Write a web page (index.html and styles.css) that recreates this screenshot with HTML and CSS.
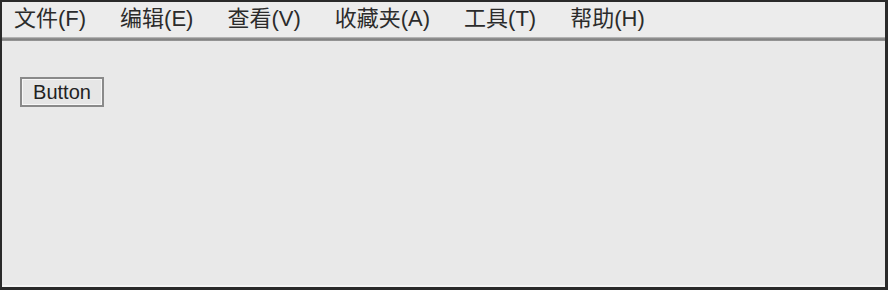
FILE: index.html
```html
<!DOCTYPE html>
<html lang="zh-CN">
<head>
<meta charset="utf-8">
<title>Window</title>
<link rel="stylesheet" href="styles.css">
</head>
<body>
<div class="frame">
  <nav class="menubar">
    <span class="menu-item">文件(F)</span>
    <span class="menu-item">编辑(E)</span>
    <span class="menu-item">查看(V)</span>
    <span class="menu-item">收藏夹(A)</span>
    <span class="menu-item">工具(T)</span>
    <span class="menu-item">帮助(H)</span>
  </nav>
  <div class="separator"></div>
  <main class="content">
    <button class="btn" type="button">Button</button>
  </main>
</div>
</body>
</html>
```

FILE: styles.css
```css
html, body {
  margin: 0;
  padding: 0;
  background: #e9e9e9;
}

.frame {
  box-sizing: border-box;
  width: 888px;
  height: 290px;
  border-style: solid;
  border-color: #2a2a2a;
  border-width: 2px 3px 3px 2px;
  background: #e9e9e9;
  display: flex;
  flex-direction: column;
  font-family: "Liberation Sans", "Noto Sans CJK SC", sans-serif;
  color: #2b2b2b;
}

.menubar {
  height: 35px;
  display: flex;
  align-items: center;
  gap: 34px;
  padding-left: 12px;
  padding-bottom: 2px;
  box-sizing: border-box;
  background: #ececec;
  font-size: 22px;
  line-height: 33px;
}

.menu-item {
  white-space: nowrap;
}

.separator {
  height: 4px;
  background: linear-gradient(#c4c4c4, #7d7d7d 50%, #9a9a9a);
}

.content {
  flex: 1;
  padding: 36px 0 0 18px;
  box-shadow: inset 0 -2px 0 #f4f4f4;
}

.btn {
  box-sizing: border-box;
  width: 84px;
  height: 30px;
  margin: 0;
  padding: 0;
  border: 2px solid #8a8a8a;
  box-shadow: inset 0 0 0 1px #f7f7f7;
  background: #e6e6e6;
  font-family: "Liberation Sans", sans-serif;
  font-size: 20px;
  color: #222;
  display: block;
}
```
